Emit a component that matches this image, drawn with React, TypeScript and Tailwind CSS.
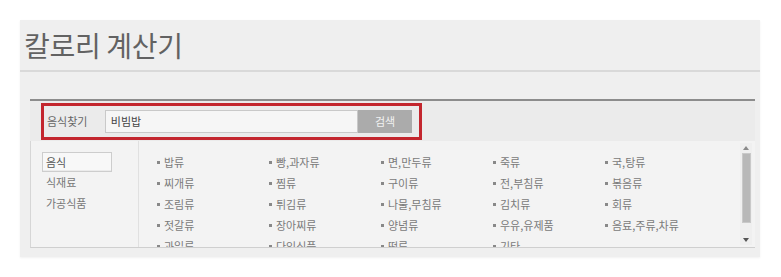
import React from "react";

const rows: string[][] = [
  ["밥류", "빵,과자류", "면,만두류", "죽류", "국,탕류"],
  ["찌개류", "찜류", "구이류", "전,부침류", "볶음류"],
  ["조림류", "튀김류", "나물,무침류", "김치류", "회류"],
  ["젓갈류", "장아찌류", "양념류", "우유,유제품", "음료,주류,차류"],
  ["과일류", "다익식품", "떡류", "기타", ""],
];

export default function App() {
  return (
    <div
      className="w-[781px] h-[277px] bg-white pt-[20px] pl-[20px] overflow-hidden"
      style={{ fontFamily: '"Noto Sans CJK KR", "Noto Sans", sans-serif' }}
    >
      <div className="w-[740px] h-[237px] bg-[#efefef] flex flex-col shadow-[0_1px_2px_rgba(0,0,0,0.06)]">
        <div className="h-[50px] flex items-center pl-[4px]">
          <h1 className="text-[28px] leading-none text-[#626262] tracking-[-0.3px]">칼로리 계산기</h1>
        </div>
        <div className="h-[2px] bg-[#d9d9d9]" />
        <div className="h-[27px]" />
        <div className="ml-[10px] w-[725px] border-t-2 border-[#8c8c8c] flex flex-col">
          <div className="h-[40px] bg-[#ebebeb] flex items-center pl-[11px]">
            <div className="w-[381px] h-[37px] border-[3px] border-[#c3262e] flex items-center pl-[3px] pr-[7px]">
              <span className="text-[11px] text-[#666] w-[58px]">음식찾기</span>
              <div className="w-[254px] h-[23px] bg-[#f6f6f6] border border-[#c9c9c9] flex items-center pl-[5px] text-[11px] text-[#444]">
                비빔밥
              </div>
              <div className="w-[54px] h-[23px] bg-[#ababab] flex items-center justify-center text-[11px] text-[#f2f2f2]">
                검색
              </div>
            </div>
          </div>
          <div className="h-[107px] bg-[#f3f3f3] border-l border-[#d6d6d6] border-b border-b-[#cfcfcf] flex">
            <div className="w-[108px] border-r border-[#e0e0e0] pt-[11px] pl-[11px] flex flex-col text-[11px] text-[#777]">
              <div className="w-[70px] h-[20px] border border-[#cdcdcd] bg-[#f8f8f8] flex items-center pl-[3px] text-[#555] shadow-[inset_0_-1px_0_rgba(0,0,0,0.05)]">
                음식
              </div>
              <div className="h-[21px] flex items-center pl-[4px]">식재료</div>
              <div className="h-[21px] flex items-center pl-[4px]">가공식품</div>
            </div>
            <div className="flex-1 relative overflow-hidden">
              <div className="pt-[11px] pl-[18px] flex flex-col">
                {rows.map((r, i) => (
                  <div key={i} className="h-[21px] grid grid-cols-[112px_112px_112px_112px_112px] items-center">
                    {r.map((t, j) => (
                      <div key={j} className="flex items-center text-[11px] text-[#7a7a7a]">
                        {t && (
                          <>
                            <span className="w-[3px] h-[3px] bg-[#888] mr-[4px]" />
                            <span>{t}</span>
                          </>
                        )}
                      </div>
                    ))}
                  </div>
                ))}
              </div>
              <div className="absolute right-[3px] top-[2px] bottom-[2px] w-[12px] bg-[#efefef] flex flex-col items-center">
                <div className="h-[9px] flex items-center justify-center">
                  <svg width="6" height="4" viewBox="0 0 6 4"><path d="M0 4 L3 0 L6 4 Z" fill="#8a8a8a" /></svg>
                </div>
                <div className="w-[9px] h-[70px] bg-[#b8b8b8] border border-[#c9c9c9] mt-[1px]" />
                <div className="flex-1" />
                <div className="h-[10px] flex items-center justify-center">
                  <svg width="6" height="4" viewBox="0 0 6 4"><path d="M0 0 L6 0 L3 4 Z" fill="#555" /></svg>
                </div>
              </div>
            </div>
          </div>
        </div>
      </div>
    </div>
  );
}
